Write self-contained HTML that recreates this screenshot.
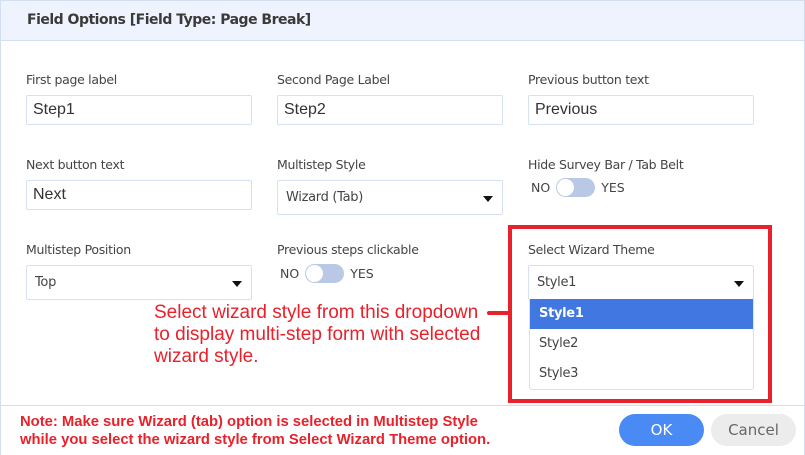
<!DOCTYPE html>
<html><head><style>
*{box-sizing:border-box;margin:0;padding:0}
body{width:805px;height:455px;background:#fff;font-family:"DejaVu Sans","Liberation Sans",sans-serif;position:relative;overflow:hidden;color:#333}
.frame{position:absolute;left:0;top:0;width:805px;height:455px;border:1px solid #d4def2;border-bottom:none}
.hdr{position:absolute;left:0;top:0;width:805px;height:41px;background:#eef3fd;border:1px solid #d4def2;font-size:14px;font-weight:bold;color:#3a3a3a;padding:11px 26px;letter-spacing:-0.5px}
.lbl{position:absolute;font-size:12.5px;color:#444;letter-spacing:-0.3px}
.inp{position:absolute;width:226px;height:30px;border:1px solid #d6e0f5;border-radius:2px;font-family:"Liberation Sans",sans-serif;font-size:16px;color:#333;padding:5px 6px}
.sel{position:absolute;width:226px;height:35px;border:1px solid #d6e0f5;border-radius:2px;font-size:13px;color:#444;padding:9px 8px;letter-spacing:-0.3px}
.sel:after{content:"";position:absolute;right:9px;top:15px;border:5px solid transparent;border-top:6px solid #111;border-bottom:0}
.tg{position:absolute;font-size:12.5px;color:#444;display:flex;align-items:center;gap:6px}
.sw{width:39px;height:19px;border-radius:10px;background:#b9c8e4;position:relative}
.sw:before{content:"";position:absolute;left:1px;top:1px;width:17px;height:17px;border-radius:50%;background:#fff}
.red{position:absolute;left:508px;top:225px;width:264px;height:178px;border:4px solid #e8212b}
.dd{position:absolute;left:529px;top:299px;width:225px;height:91px;border:1px solid #d6e0f5;border-top:none;border-radius:0 0 3px 3px;font-size:13px;color:#444}
.dd div{height:30px;padding:7px 9px;letter-spacing:-0.3px}
.ann{position:absolute;left:154px;top:302px;font-family:"Liberation Sans",sans-serif;font-size:19px;line-height:22px;color:#e8212b}
.note{position:absolute;left:20px;top:413px;font-family:"Liberation Sans",sans-serif;font-weight:bold;font-size:14.8px;line-height:18px;color:#e8212b}
.btn{position:absolute;top:414px;width:85px;height:32px;border-radius:16px;font-size:15px;text-align:center;line-height:32px}
</style></head><body>
<div class="frame"></div>
<div class="hdr">Field Options [Field Type: Page Break]</div>
<div class="lbl" style="left:26px;top:72px">First page label</div>
<div class="lbl" style="left:277px;top:72px">Second Page Label</div>
<div class="lbl" style="left:528px;top:72px">Previous button text</div>
<div class="inp" style="left:26px;top:95px">Step1</div>
<div class="inp" style="left:277px;top:95px">Step2</div>
<div class="inp" style="left:528px;top:95px">Previous</div>
<div class="lbl" style="left:26px;top:157px">Next button text</div>
<div class="lbl" style="left:277px;top:157px">Multistep Style</div>
<div class="lbl" style="left:528px;top:157px">Hide Survey Bar / Tab Belt</div>
<div class="inp" style="left:26px;top:180px">Next</div>
<div class="sel" style="left:277px;top:180px">Wizard (Tab)</div>
<div class="tg" style="left:531px;top:178px">NO<span class="sw"></span>YES</div>
<div class="lbl" style="left:26px;top:242px">Multistep Position</div>
<div class="lbl" style="left:277px;top:242px">Previous steps clickable</div>
<div class="lbl" style="left:528px;top:242px">Select Wizard Theme</div>
<div class="sel" style="left:26px;top:265px">Top</div>
<div class="tg" style="left:280px;top:264px">NO<span class="sw"></span>YES</div>
<div class="sel" style="left:528px;top:265px">Style1</div>
<div class="dd"><div style="background:#4077e0;color:#fff;font-weight:bold">Style1</div><div>Style2</div><div>Style3</div></div>
<div class="red"></div>
<div style="position:absolute;left:487px;top:311px;width:22px;height:4px;background:#e8212b;border-radius:2px"></div>
<div class="ann">Select wizard style from this dropdown<br>to display multi-step form with selected<br>wizard style.</div>
<div style="position:absolute;left:0;top:405px;width:805px;height:1px;background:#d4def2"></div>
<div class="note">Note: Make sure Wizard (tab) option is selected in Multistep Style<br>while you select the wizard style from Select Wizard Theme option.</div>
<div class="btn" style="left:619px;background:#4a8af4;color:#fff">OK</div>
<div class="btn" style="left:711px;background:#ececec;color:#666">Cancel</div>
</body></html>
